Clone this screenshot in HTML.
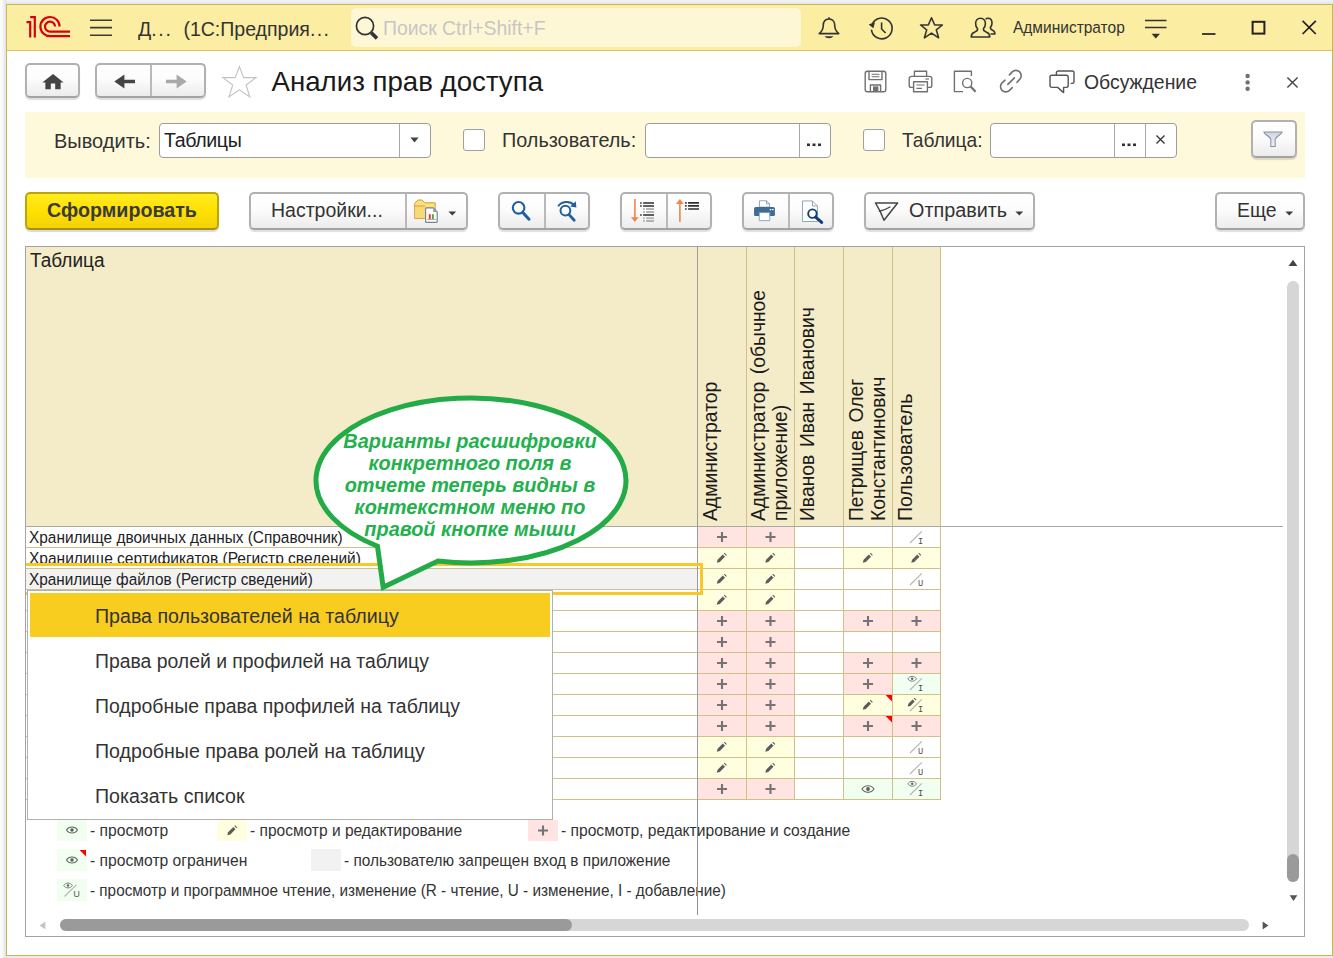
<!DOCTYPE html>
<html lang="ru">
<head>
<meta charset="utf-8">
<title>Анализ прав доступа</title>
<style>
*{box-sizing:border-box;margin:0;padding:0}
html,body{width:1333px;height:958px;overflow:hidden}
body{background:#ececec;font-family:"Liberation Sans",Arial,sans-serif;color:#333;position:relative}
.abs{position:absolute}
#win{position:absolute;left:6px;top:4px;width:1327px;height:952px;background:#fff;border:1px solid #c8b55c;}
#tbar{position:absolute;left:7px;top:5px;width:1325px;height:46px;background:#fbeda1;border-bottom:1px solid #d9c56a}
.t{position:absolute;white-space:nowrap;line-height:1;transform-origin:0 50%;transform:scaleX(var(--k,1))}
.btn{position:absolute;border:2px solid #b1b1b1;border-bottom-color:#a3a3a3;border-radius:5px;background:linear-gradient(#ffffff 0%,#fcfcfc 45%,#ececec 100%);box-shadow:0 2px 1px rgba(0,0,0,.13)}
.div{position:absolute;top:0;bottom:0;width:2px;background:#b9b9b9}
.inp{position:absolute;border:1px solid #9c9c9c;border-radius:4px;background:#fff}
.chk{position:absolute;width:22px;height:22px;border:1px solid #a0a0a0;border-radius:3px;background:#fff}
svg{position:absolute;overflow:visible}
</style>
</head>
<body>
<div class="abs" style="left:0;top:0;width:1333px;height:4px;background:linear-gradient(#f3f3f4,#e6e6e9)"></div>
<div class="abs" style="left:0;top:0;width:6px;height:958px;background:linear-gradient(to right,#fdfdfd 0%,#f6f6f6 45%,#e2e2e2 100%)"></div>
<div id="win"></div>
<div id="tbar"></div>

<!-- TITLE BAR -->
<svg style="left:26px;top:16px" width="45" height="22" viewBox="0 0 45 22">
  <g fill="none" stroke="#d8000f" stroke-width="2.2">
    <path d="M0.5 6.2H4.2V21.5"/>
    <path d="M4.2 1.2H8.8V21.5"/>
    <path d="M44 20.2H24.2A9.6 9.6 0 1 1 33.6 10.6"/>
    <path d="M44 15.6H24.2A5 5 0 1 1 29 10.6"/>
  </g>
</svg>
<svg style="left:90px;top:19px" width="22" height="18" viewBox="0 0 22 18"><g stroke="#3a3a3a" stroke-width="1.6"><path d="M0 1.3H22M0 8.6H22M0 16.3H22"/></g></svg>
<div class="t" style="left:138px;top:17.65px;font-size:21.0px;color:#333;white-space:pre;--k:0.93">Д<span style="letter-spacing:1.8px">...</span>  (1С:Предприя<span style="letter-spacing:1.5px">...</span></div>
<div class="abs" style="left:351px;top:8px;width:450px;height:39px;background:#fef7d6;border-radius:5px"></div>
<svg style="left:355px;top:16px" width="24" height="24" viewBox="0 0 24 24"><circle cx="10" cy="10" r="8.6" fill="none" stroke="#333" stroke-width="1.7"/><path d="M16.2 16.7L22 22.4" stroke="#333" stroke-width="3.6"/></svg>
<div class="t" style="left:383px;top:17.67px;font-size:20.58px;color:#c6c6c6;--k:0.942">Поиск Ctrl+Shift+F</div>

<!-- title bar right icons -->
<svg style="left:817px;top:15px" width="24" height="25" viewBox="0 0 24 25"><g fill="none" stroke="#333" stroke-width="1.6" stroke-linejoin="round"><path d="M12 2.2V4M12 4C7.8 4 6.2 7.4 6.2 11C6.2 15 4.6 16.6 2.2 18.6H21.8C19.4 16.6 17.8 15 17.8 11C17.8 7.4 16.2 4 12 4Z"/></g><path d="M7.6 21.2H16.4C15 23.8 9 23.8 7.6 21.2Z" fill="#333"/></svg>
<svg style="left:867.5px;top:15.7px" width="26" height="25" viewBox="0 0 26 25"><g fill="none" stroke="#333" stroke-width="1.6"><path d="M4.2 8.2A10.4 10.4 0 1 1 3.4 13.6"/><path d="M13.6 6.4V13L17.6 17"/></g><path d="M0.6 8.6L7 6.2L5.4 12.2Z" fill="#333"/></svg>
<svg style="left:918.5px;top:15.7px" width="25" height="24" viewBox="0 0 25 24"><path d="M12.5 1.8L15.7 9H23.4L17.3 13.9L19.6 21.8L12.5 17.1L5.4 21.8L7.7 13.9L1.6 9H9.3Z" fill="none" stroke="#333" stroke-width="1.6" stroke-linejoin="round"/></svg>
<svg style="left:969.5px;top:15.6px" width="26" height="24" viewBox="0 0 26 24"><g fill="none" stroke="#333" stroke-width="1.6" stroke-linejoin="round"><path d="M10.5 2.2C13.6 2.2 15.4 4.6 15.4 7.6C15.4 10 14.4 11.8 13.4 12.8C13.2 14.4 14.6 15.4 16.6 16.2C18.8 17 19.8 18.2 19.8 21H1.2C1.2 18.2 2.2 17 4.4 16.2C6.4 15.4 7.8 14.4 7.6 12.8C6.6 11.8 5.6 10 5.6 7.6C5.6 4.6 7.4 2.2 10.5 2.2Z"/><path d="M15.6 3.2C16.2 2.6 17 2.2 18 2.2C20.6 2.2 22 4.4 22 7C22 9 21.2 10.6 20.4 11.4C20.2 12.8 21.2 13.6 22.6 14.2C24.2 14.8 24.9 16 24.9 18H20.6"/></g></svg>
<div class="t" style="left:1013px;top:19.21px;font-size:16.43px;color:#333;--k:0.9434">Администратор</div>
<svg style="left:1145px;top:19px" width="22" height="20" viewBox="0 0 22 20"><g stroke="#333" stroke-width="1.5"><path d="M0 1.4H21.5M0 8.4H21.5"/></g><path d="M6.6 14.8H15L10.8 19.4Z" fill="#333"/></svg>
<svg style="left:1201.8px;top:20px" width="115" height="16" viewBox="0 0 115 16"><g fill="none" stroke="#222" stroke-width="1.7"><path d="M0 14H13.5"/><rect x="50.6" y="1.8" width="11.8" height="11.8" stroke-width="2"/><path d="M100.6 0.8L113.8 14M113.8 0.8L100.6 14"/></g></svg>

<!-- NAV ROW -->
<div class="btn" style="left:25px;top:63px;width:55px;height:35px"></div>
<svg style="left:41.5px;top:74px" width="22" height="15.7" viewBox="0 0 21 15"><path d="M10.5 0L0.3 8.2H3.2V14.6H8.4V9.2H12.6V14.6H17.8V8.2H20.7Z" fill="#444"/></svg>
<div class="btn" style="left:95px;top:63px;width:111px;height:35px"><div class="div" style="left:53px"></div></div>
<svg style="left:113.5px;top:74px" width="21" height="15" viewBox="0 0 21 15"><path d="M21 5.7H10.4V0.4L0.3 7.5L10.4 14.6V9.3H21Z" fill="#444"/></svg>
<svg style="left:166px;top:74px" width="21" height="15" viewBox="0 0 21 15"><path d="M0 5.7H10.6V0.4L20.7 7.5L10.6 14.6V9.3H0Z" fill="#a9a9a9"/></svg>
<svg style="left:220.6px;top:64.6px" width="36.8" height="34.6" viewBox="0 0 36 34"><path d="M18 1.6L22.2 12.4H34.2L24.6 19.6L28.2 31.4L18 24.4L7.8 31.4L11.4 19.6L1.8 12.4H13.8Z" fill="#fff" stroke="#c2c2c2" stroke-width="1.1" stroke-linejoin="miter"/></svg>
<div class="t" style="left:271.5px;top:68px;font-size:27.65px;color:#1a1a1a">Анализ прав доступа</div>

<!-- nav row right icons -->
<svg style="left:864px;top:70px" width="23" height="23" viewBox="0 0 23 23"><g fill="none" stroke="#707070" stroke-width="1.4" stroke-linejoin="round"><path d="M3.4 1.2H19.6C20.8 1.2 21.8 2.2 21.8 3.4V19.6C21.8 20.8 20.8 21.8 19.6 21.8H3.4C2.2 21.8 1.2 20.8 1.2 19.6V3.4C1.2 2.2 2.2 1.2 3.4 1.2Z"/><path d="M5 1.4V9.6H18V1.4"/><path d="M7.6 4.2H15.4M7.6 6.8H15.4" stroke-width="1.1"/><path d="M6.4 21.6V15H16.6V21.6"/></g><rect x="9" y="16.4" width="5.4" height="5" fill="#707070"/></svg>
<svg style="left:908px;top:70px" width="25" height="23" viewBox="0 0 25 23"><g fill="none" stroke="#707070" stroke-width="1.4" stroke-linejoin="round"><path d="M6.4 6.4V1.2H18.6V6.4"/><path d="M5.6 17.4H3.4C2.2 17.4 1.2 16.4 1.2 15.2V8.6C1.2 7.4 2.2 6.4 3.4 6.4H21.6C22.800000000000001 6.4 23.8 7.4 23.8 8.6V15.2C23.8 16.4 22.8 17.4 21.6 17.4H19.4"/><path d="M5.6 11.8H19.4V21.8H5.6Z"/><path d="M8.4 15H16.6M8.4 18.4H14" stroke-width="1.2"/><path d="M17.4 9H21" stroke-width="1.2"/></g></svg>
<svg style="left:953px;top:70px" width="24" height="23" viewBox="0 0 24 23"><g fill="none" stroke="#707070" stroke-width="1.4"><path d="M18.4 6V1.2H1.4V21.6H10" stroke-linejoin="round"/><circle cx="14.2" cy="13" r="4.6"/><path d="M17.6 16.6L22.6 21.8" stroke-width="2.2"/></g></svg>
<svg style="left:998px;top:68px" width="26" height="26" viewBox="0 0 26 26"><g fill="none" stroke="#707070" stroke-width="1.6" stroke-linecap="round"><path d="M11.4 6.9L14.15 3.9A5.3 5.3 0 0 1 21.65 11.4L19 14.3"/><path d="M7 12.2L4.05 14.85A5.3 5.3 0 0 0 11.55 22.35L14.3 19.6"/><path d="M9.8 16.4L16.4 9.9"/></g></svg>
<svg style="left:1049px;top:70px" width="26" height="24" viewBox="0 0 26 24"><g fill="none" stroke="#555" stroke-width="1.4" stroke-linejoin="round"><path d="M7.4 5V2.8C7.4 1.8 8.2 1 9.2 1H23.2C24.2 1 25 1.8 25 2.8V11.6C25 12.6 24.2 13.4 23.2 13.4H21.6"/><path d="M2.8 5.200000000000001H17.4C18.4 5.2 19.2 6 19.2 7V15.6C19.2 16.6 18.4 17.4 17.4 17.4H14.6V22.6L8.6 17.4H2.8C1.8 17.4 1 16.6 1 15.6V7C1 6 1.8 5.2 2.8 5.2Z"/></g></svg>
<div class="t" style="left:1084px;top:71.8px;font-size:20.37px;color:#333;--k:0.9524">Обсуждение</div>
<svg style="left:1244.4px;top:72.6px" width="8" height="19" viewBox="0 0 8 19"><g fill="#707070"><circle cx="3.6" cy="3" r="2.2"/><circle cx="3.6" cy="9.4" r="2.2"/><circle cx="3.6" cy="15.8" r="2.2"/></g></svg>
<svg style="left:1287px;top:77px" width="11" height="11" viewBox="0 0 11 11"><path d="M0.4 0.4L10.6 10.6M10.6 0.4L0.4 10.6" stroke="#444" stroke-width="1.4"/></svg>

<!-- FILTER PANEL -->
<div class="abs" style="left:25px;top:112px;width:1280px;height:66px;background:#fff9db"></div>
<div class="t" style="left:54px;top:129.65px;font-size:21.0px;color:#333;--k:0.9524">Выводить:</div>
<div class="inp" style="left:159px;top:123px;width:272px;height:35px"><div class="div" style="left:239px;width:1px;background:#a8a8a8"></div></div>
<div class="t" style="left:164px;top:129.67px;font-size:20.58px;letter-spacing:-0.4px;color:#222;--k:0.9524">Таблицы</div>
<svg style="left:410px;top:136.8px" width="9" height="6" viewBox="0 0 9 6"><path d="M0.4 0.6H8.6L4.5 5.4Z" fill="#444"/></svg>
<div class="chk" style="left:463px;top:129px"></div>
<div class="t" style="left:502px;top:130.1px;font-size:20.68px;color:#333;--k:0.959">Пользователь:</div>
<div class="inp" style="left:645px;top:123px;width:186px;height:35px"><div class="div" style="left:153px;width:1px;background:#a8a8a8"></div></div>
<svg style="left:807px;top:143px" width="15" height="4" viewBox="0 0 15 4"><g fill="#333"><rect x="0" y="0.5" width="3" height="2.6"/><rect x="5.5" y="0.5" width="3" height="2.6"/><rect x="11" y="0.5" width="3" height="2.6"/></g></svg>
<div class="chk" style="left:863px;top:129px"></div>
<div class="t" style="left:902px;top:129.69px;font-size:20.16px;color:#333;--k:0.9524">Таблица:</div>
<div class="inp" style="left:990px;top:123px;width:187px;height:35px"><div class="div" style="left:123px;width:1px;background:#a8a8a8"></div><div class="div" style="left:154px;width:1px;background:#a8a8a8"></div></div>
<svg style="left:1122px;top:143px" width="15" height="4" viewBox="0 0 15 4"><g fill="#333"><rect x="0" y="0.5" width="3" height="2.6"/><rect x="5.5" y="0.5" width="3" height="2.6"/><rect x="11" y="0.5" width="3" height="2.6"/></g></svg>
<svg style="left:1156px;top:135px" width="9" height="9" viewBox="0 0 9 9"><path d="M0.5 0.5L8.5 8.5M8.5 0.5L0.5 8.5" stroke="#333" stroke-width="1.3"/></svg>
<div class="btn" style="left:1251px;top:120px;width:46px;height:38px;"></div>
<svg style="left:1262.5px;top:130.6px" width="20" height="16.8" viewBox="0 0 22 18" preserveAspectRatio="none"><defs><linearGradient id="fg" x1="0" y1="0" x2="0" y2="1"><stop offset="0" stop-color="#cfd6de"/><stop offset="1" stop-color="#eef1f4"/></linearGradient></defs><path d="M1 1H21C21 3.2 13.4 6.6 13.4 9V16.6H8.6V9C8.6 6.6 1 3.2 1 1Z" fill="url(#fg)" stroke="#85919e" stroke-width="1.1"/></svg>

<!-- COMMAND BAR -->
<div class="btn" style="left:25px;top:192px;width:194px;height:38px;border-color:#bba60a;border-bottom-color:#a89200;background:linear-gradient(#ffeb22 0%,#ffe100 50%,#f3d10a 100%);box-shadow:0 2px 1px rgba(0,0,0,.15)"></div>
<div class="t" style="left:47px;top:201px;font-size:19.7px;font-weight:bold;color:#3a3a3a">Сформировать</div>
<div class="btn" style="left:249px;top:192px;width:219px;height:38px"><div class="div" style="left:154px"></div></div>
<div class="t" style="left:270.5px;top:200.17px;font-size:20.48px;color:#333;--k:0.9524">Настройки...</div>
<div class="btn" style="left:498px;top:192px;width:92px;height:38px"><div class="div" style="left:44px"></div></div>
<div class="btn" style="left:620px;top:192px;width:92px;height:38px"><div class="div" style="left:44px"></div></div>
<div class="btn" style="left:742px;top:192px;width:92px;height:38px"><div class="div" style="left:44px"></div></div>
<div class="btn" style="left:864px;top:192px;width:171px;height:38px"></div>
<div class="t" style="left:909px;top:199.66px;font-size:20.79px;color:#333;--k:0.9524">Отправить</div>
<svg style="left:1015.2px;top:210.6px" width="9" height="6" viewBox="0 0 9 6"><path d="M0.4 0.4H8.2L4.3 4.4Z" fill="#3c3c3c"/></svg>
<div class="btn" style="left:1215px;top:192px;width:90px;height:38px"></div>
<div class="t" style="left:1237px;top:199.68px;font-size:20.37px;color:#333;--k:0.9524">Еще</div>
<svg style="left:1285.2px;top:210.6px" width="9" height="6" viewBox="0 0 9 6"><path d="M0.4 0.4H8.2L4.3 4.4Z" fill="#3c3c3c"/></svg>
<svg style="left:448.2px;top:210.6px" width="9" height="6" viewBox="0 0 9 6"><path d="M0.4 0.4H8.2L4.3 4.4Z" fill="#3c3c3c"/></svg>

<!-- command bar icons -->
<svg style="left:413px;top:198px" width="26" height="26" viewBox="0 0 26 26">
  <path d="M1.7 20.4V5.2L5.1 2H9L11.600000000000001 4.8H22.2V20.4Z" fill="#fde27c" stroke="#d9983c" stroke-width="1" stroke-linejoin="round"/>
  <path d="M2.2 8.5H21.700000000000003V19.9H2.2Z" fill="#f8d878"/>
  <path d="M1.7 8H12" stroke="#d9983c" stroke-width="1"/>
  <path d="M13.4 9.9H20.2L24.2 13.9V23.4C24.2 24 23.8 24.3 23.3 24.3H13.4C12.9 24.3 12.6 24 12.6 23.4V10.8C12.6 10.2 12.9 9.9 13.4 9.9Z" fill="#fff" stroke="#6f879b" stroke-width="1.2"/>
  <path d="M20.2 9.9V13.9H24.2Z" fill="#8da0b2"/>
  <rect x="15.8" y="16.200000000000003" width="1.9" height="4.8" fill="#e8331c"/><rect x="18.9" y="16.2" width="1.9" height="4.8" fill="#4aa83a"/>
  <path d="M14.2 21.4H23" stroke="#9a7a7a" stroke-width="0.7"/>
</svg>
<svg style="left:511px;top:200px" width="20" height="21" viewBox="0 0 20 21"><circle cx="7.6" cy="7.8" r="5.8" fill="none" stroke="#1f5f9f" stroke-width="2.1"/><path d="M11.8 12.4L18 19.2" stroke="#1f5f9f" stroke-width="3" stroke-linecap="round"/></svg>
<svg style="left:556px;top:199px" width="23" height="23" viewBox="0 0 23 23"><circle cx="9.4" cy="11.6" r="4.9" fill="none" stroke="#1f5f9f" stroke-width="2"/><path d="M13 15.6L18.2 21.2" stroke="#1f5f9f" stroke-width="2.8" stroke-linecap="round"/><path d="M2.2 7.4C5.2 2.2 13.6 1.4 18 6" fill="none" stroke="#1f5f9f" stroke-width="1.9"/><path d="M14.2 7.6L20.4 8.4L19.8 2.2Z" fill="#1f5f9f"/></svg>
<svg style="left:620px;top:192px" width="92" height="38" viewBox="0 0 92 38"><path d="M14.9 7V26" stroke="#f08447" stroke-width="1.6"/><path d="M11 25.2H18.6L14.8 30Z" fill="#f08447"/><path d="M20.1 10.9H21.7M23.1 10.9H34M20.1 13.9H21.7M23.1 13.9H34M20.1 23H21.7M23.1 23H34" stroke="#2e2e2e" stroke-width="1.5"/><path d="M23.1 17H24.7M26.1 17H34M23.1 20H24.7M26.1 20H34M23.1 26.1H24.7M26.1 26.1H34M23.1 29H24.7M26.1 29H34" stroke="#9c9c9c" stroke-width="1.4"/><path d="M59.9 11V30" stroke="#f08447" stroke-width="1.6"/><path d="M56 12H63.8L59.9 7Z" fill="#f08447"/><path d="M65.1 10.9H66.7M68.1 10.9H79M65.1 13.9H66.7M68.1 13.9H79M65.1 17H66.7M68.1 17H79" stroke="#2e2e2e" stroke-width="1.6"/></svg>

<svg style="left:753px;top:200px" width="23" height="22" viewBox="0 0 23 23"><path d="M6.2 7.4V0.8H13.6L16.8 4V7.4Z" fill="#fff" stroke="#7f98b2" stroke-width="0.9"/><path d="M13.6 0.8V4H16.8" fill="none" stroke="#7f98b2" stroke-width="0.9"/><path d="M2.4 7.4H20.6C21.8 7.4 22.4 8.2 22.4 9.2V15.4C22.4 16.2 21.8 16.8 21 16.8H2C1.2 16.8 0.6 16.2 0.6 15.4V9.2C0.6 8.2 1.2 7.4 2.4 7.4Z" fill="#3f6b97"/><path d="M6 13.2H17V21.6H6Z" fill="#fff" stroke="#7f98b2" stroke-width="0.9"/><rect x="17" y="9.4" width="1.6" height="1.3" fill="#fff"/><rect x="19.4" y="9.4" width="1.6" height="1.3" fill="#fff"/></svg>
<svg style="left:801px;top:199.5px" width="24" height="24" viewBox="0 0 24 25"><path d="M1 1H11.4L16.6 6.2V22.4H1Z" fill="#fff" stroke="#7f98b2" stroke-width="0.9"/><path d="M11.4 1V6.2H16.6" fill="none" stroke="#7f98b2" stroke-width="0.9"/><circle cx="11.4" cy="14.2" r="4.4" fill="#fff" stroke="#0f3f7a" stroke-width="2"/><path d="M14.8 17.8L21 23.4" stroke="#0f3f7a" stroke-width="3.2" stroke-linecap="round"/></svg>
<svg style="left:874px;top:201px" width="25" height="21" viewBox="0 0 25 21"><path d="M1.5 2H23.6L10 19.2L6 10Z" fill="none" stroke="#444" stroke-width="1.5" stroke-linejoin="round"/><path d="M5.4 10.2C9 9.6 12.6 8 16 6" fill="none" stroke="#444" stroke-width="1.4" stroke-linecap="round"/></svg>

<!-- SPREADSHEET -->
<div class="abs" style="left:25px;top:246px;width:1280px;height:691px;border:1px solid #a3a3a3;background:#fff"></div>
<div class="abs" style="left:26px;top:247px;width:914px;height:279px;background:#f4ecc8"></div>
<div class="abs" style="left:698px;top:527px;width:48px;height:20px;background:#ffe4e1"></div>
<div class="abs" style="left:747px;top:527px;width:47px;height:20px;background:#ffe4e1"></div>
<div class="abs" style="left:698px;top:548px;width:48px;height:20px;background:#ffffe0"></div>
<div class="abs" style="left:747px;top:548px;width:47px;height:20px;background:#ffffe0"></div>
<div class="abs" style="left:844px;top:548px;width:48px;height:20px;background:#ffffe0"></div>
<div class="abs" style="left:893px;top:548px;width:47px;height:20px;background:#ffffe0"></div>
<div class="abs" style="left:698px;top:569px;width:48px;height:20px;background:#ffffe0"></div>
<div class="abs" style="left:747px;top:569px;width:47px;height:20px;background:#ffffe0"></div>
<div class="abs" style="left:698px;top:590px;width:48px;height:20px;background:#ffffe0"></div>
<div class="abs" style="left:747px;top:590px;width:47px;height:20px;background:#ffffe0"></div>
<div class="abs" style="left:698px;top:611px;width:48px;height:20px;background:#ffe4e1"></div>
<div class="abs" style="left:747px;top:611px;width:47px;height:20px;background:#ffe4e1"></div>
<div class="abs" style="left:844px;top:611px;width:48px;height:20px;background:#ffe4e1"></div>
<div class="abs" style="left:893px;top:611px;width:47px;height:20px;background:#ffe4e1"></div>
<div class="abs" style="left:698px;top:632px;width:48px;height:20px;background:#ffe4e1"></div>
<div class="abs" style="left:747px;top:632px;width:47px;height:20px;background:#ffe4e1"></div>
<div class="abs" style="left:698px;top:653px;width:48px;height:20px;background:#ffe4e1"></div>
<div class="abs" style="left:747px;top:653px;width:47px;height:20px;background:#ffe4e1"></div>
<div class="abs" style="left:844px;top:653px;width:48px;height:20px;background:#ffe4e1"></div>
<div class="abs" style="left:893px;top:653px;width:47px;height:20px;background:#ffe4e1"></div>
<div class="abs" style="left:698px;top:674px;width:48px;height:20px;background:#ffe4e1"></div>
<div class="abs" style="left:747px;top:674px;width:47px;height:20px;background:#ffe4e1"></div>
<div class="abs" style="left:844px;top:674px;width:48px;height:20px;background:#ffe4e1"></div>
<div class="abs" style="left:893px;top:674px;width:47px;height:20px;background:#f0fff0"></div>
<div class="abs" style="left:698px;top:695px;width:48px;height:20px;background:#ffe4e1"></div>
<div class="abs" style="left:747px;top:695px;width:47px;height:20px;background:#ffe4e1"></div>
<div class="abs" style="left:844px;top:695px;width:48px;height:20px;background:#ffffe0"></div>
<div class="abs" style="left:893px;top:695px;width:47px;height:20px;background:#ffffe0"></div>
<div class="abs" style="left:698px;top:716px;width:48px;height:20px;background:#ffe4e1"></div>
<div class="abs" style="left:747px;top:716px;width:47px;height:20px;background:#ffe4e1"></div>
<div class="abs" style="left:844px;top:716px;width:48px;height:20px;background:#ffe4e1"></div>
<div class="abs" style="left:893px;top:716px;width:47px;height:20px;background:#ffe4e1"></div>
<div class="abs" style="left:698px;top:737px;width:48px;height:20px;background:#ffffe0"></div>
<div class="abs" style="left:747px;top:737px;width:47px;height:20px;background:#ffffe0"></div>
<div class="abs" style="left:698px;top:758px;width:48px;height:20px;background:#ffffe0"></div>
<div class="abs" style="left:747px;top:758px;width:47px;height:20px;background:#ffffe0"></div>
<div class="abs" style="left:698px;top:779px;width:48px;height:20px;background:#ffe4e1"></div>
<div class="abs" style="left:747px;top:779px;width:47px;height:20px;background:#ffe4e1"></div>
<div class="abs" style="left:844px;top:779px;width:48px;height:20px;background:#f0fff0"></div>
<div class="abs" style="left:893px;top:779px;width:47px;height:20px;background:#f0fff0"></div>
<div class="t" style="left:29px;top:530.13px;font-size:16.73px;color:#222;--k:0.9174;--k:0.9207">Хранилище двоичных данных (Справочник)</div>
<div class="t" style="left:29px;top:551.13px;font-size:16.73px;color:#222;--k:0.9174;--k:0.928">Хранилище сертификатов (Регистр сведений)</div>
<div class="abs" style="left:26px;top:563px;width:674px;height:31px;background:#fff"></div>
<div class="abs" style="left:26px;top:569px;width:671px;height:20px;background:#f2f2f2"></div>
<svg style="left:0;top:0" width="1333" height="958" viewBox="0 0 1333 958">
<defs>
<g id="plus"><path d="M-5 0H5M0 -5V5" stroke="#747474" stroke-width="2.1" fill="none"/></g>
<g id="pen"><path d="M-4.7 4.7L-3.9 1.7L1.3 -3.5L3.5 -1.3L-1.7 3.9Z" fill="#5c5c5c"/><path d="M2.3 -4.5L3.1 -5.3L5.3 -3.1L4.5 -2.3Z" fill="#5c5c5c"/></g>
<g id="eye"><path d="M-6 0C-3.4 -4.4 3.4 -4.4 6 0C3.4 4.4 -3.4 4.4 -6 0Z" fill="none" stroke="#6a6a6a" stroke-width="1.15"/><circle cx="0" cy="0" r="1.9" fill="#5c5c5c"/></g>
<g id="slash"><path d="M-6.5 6L5.3 -5.6" stroke="#b4b4b4" stroke-width="1.1" fill="none"/></g>
<g id="eyes"><path d="M-4.3 0C-2.5 -3.2 2.5 -3.2 4.3 0C2.5 3.2 -2.5 3.2 -4.3 0Z" fill="none" stroke="#777" stroke-width="0.95"/><circle cx="0" cy="0" r="1.25" fill="#666"/></g>
<g id="pens"><path d="M-4.1 4.1L-3.4 1.4L0.9 -2.900000000000000L3 -0.8L-1.3 3.5Z" fill="#5c5c5c"/><path d="M1.9 -3.9L2.7 -4.7L4.8 -2.6L4 -1.8Z" fill="#5c5c5c"/></g>
<g id="red"><path d="M-6.4 0H0V6.4Z" fill="#ff0000"/></g>
</defs>
<path d="M26 547.5H941" stroke="#cfc188" stroke-width="1"/>
<path d="M26 568.5H941" stroke="#cfc188" stroke-width="1"/>
<path d="M26 589.5H941" stroke="#cfc188" stroke-width="1"/>
<path d="M26 610.5H941" stroke="#cfc188" stroke-width="1"/>
<path d="M26 631.5H941" stroke="#cfc188" stroke-width="1"/>
<path d="M26 652.5H941" stroke="#cfc188" stroke-width="1"/>
<path d="M26 673.5H941" stroke="#cfc188" stroke-width="1"/>
<path d="M26 694.5H941" stroke="#cfc188" stroke-width="1"/>
<path d="M26 715.5H941" stroke="#cfc188" stroke-width="1"/>
<path d="M26 736.5H941" stroke="#cfc188" stroke-width="1"/>
<path d="M26 757.5H941" stroke="#cfc188" stroke-width="1"/>
<path d="M26 778.5H941" stroke="#cfc188" stroke-width="1"/>
<path d="M26 799.5H941" stroke="#cfc188" stroke-width="1"/>
<path d="M746.5 247V799" stroke="#cfc188" stroke-width="1"/>
<path d="M794.5 247V799" stroke="#cfc188" stroke-width="1"/>
<path d="M843.5 247V799" stroke="#cfc188" stroke-width="1"/>
<path d="M892.5 247V799" stroke="#cfc188" stroke-width="1"/>
<path d="M940.5 247V799" stroke="#cfc188" stroke-width="1"/>
<path d="M26 526.5H1283" stroke="#a8a8a8" stroke-width="1"/>
<path d="M697.5 247V915" stroke="#9c9c9c" stroke-width="1"/>
<use href="#plus" x="722.0" y="537"/>
<use href="#plus" x="770.5" y="537"/>
<use href="#slash" x="916.5" y="537"/>
<text x="918.1" y="544.2" font-family="Liberation Mono, monospace" font-size="8.6" fill="#4a4a4a">I</text>
<use href="#pen" x="721.5" y="558"/>
<use href="#pen" x="770.0" y="558"/>
<use href="#pen" x="867.5" y="558"/>
<use href="#pen" x="916.0" y="558"/>
<use href="#pen" x="721.5" y="579"/>
<use href="#pen" x="770.0" y="579"/>
<use href="#slash" x="916.5" y="579"/>
<text x="918.1" y="586.2" font-family="Liberation Mono, monospace" font-size="8.6" fill="#4a4a4a">U</text>
<use href="#pen" x="721.5" y="600"/>
<use href="#pen" x="770.0" y="600"/>
<use href="#plus" x="722.0" y="621"/>
<use href="#plus" x="770.5" y="621"/>
<use href="#plus" x="868.0" y="621"/>
<use href="#plus" x="916.5" y="621"/>
<use href="#plus" x="722.0" y="642"/>
<use href="#plus" x="770.5" y="642"/>
<use href="#plus" x="722.0" y="663"/>
<use href="#plus" x="770.5" y="663"/>
<use href="#plus" x="868.0" y="663"/>
<use href="#plus" x="916.5" y="663"/>
<use href="#plus" x="722.0" y="684"/>
<use href="#plus" x="770.5" y="684"/>
<use href="#plus" x="868.0" y="684"/>
<use href="#slash" x="916.5" y="684"/>
<text x="918.1" y="691.2" font-family="Liberation Mono, monospace" font-size="8.6" fill="#4a4a4a">I</text>
<use href="#eyes" x="912.2" y="678.8"/>
<use href="#plus" x="722.0" y="705"/>
<use href="#plus" x="770.5" y="705"/>
<use href="#pen" x="867.5" y="705"/>
<use href="#red" x="892" y="695"/>
<use href="#slash" x="916.5" y="705"/>
<text x="918.1" y="712.2" font-family="Liberation Mono, monospace" font-size="8.6" fill="#4a4a4a">I</text>
<use href="#pens" x="911.7" y="702.4"/>
<use href="#plus" x="722.0" y="726"/>
<use href="#plus" x="770.5" y="726"/>
<use href="#plus" x="868.0" y="726"/>
<use href="#red" x="892" y="716"/>
<use href="#plus" x="916.5" y="726"/>
<use href="#pen" x="721.5" y="747"/>
<use href="#pen" x="770.0" y="747"/>
<use href="#slash" x="916.5" y="747"/>
<text x="918.1" y="754.2" font-family="Liberation Mono, monospace" font-size="8.6" fill="#4a4a4a">U</text>
<use href="#pen" x="721.5" y="768"/>
<use href="#pen" x="770.0" y="768"/>
<use href="#slash" x="916.5" y="768"/>
<text x="918.1" y="775.2" font-family="Liberation Mono, monospace" font-size="8.6" fill="#4a4a4a">U</text>
<use href="#plus" x="722.0" y="789"/>
<use href="#plus" x="770.5" y="789"/>
<use href="#eye" x="868.0" y="789"/>
<use href="#slash" x="916.5" y="789"/>
<text x="918.1" y="796.2" font-family="Liberation Mono, monospace" font-size="8.6" fill="#4a4a4a">I</text>
<use href="#eyes" x="912.2" y="783.8"/>
</svg>
<div class="t" style="left:29.8px;top:250.23px;font-size:20.52px;color:#222;--k:0.9259">Таблица</div>
<div class="t" style="left:699px;top:521px;font-size:20.6px;color:#1a1a1a;transform-origin:0 0;transform:rotate(-90deg) scaleX(0.937);word-spacing:2.4px;line-height:22px;height:22px">Администратор</div>
<div class="t" style="left:747px;top:521px;font-size:20.6px;color:#1a1a1a;transform-origin:0 0;transform:rotate(-90deg) scaleX(0.937);word-spacing:2.4px;line-height:22px;height:22px">Администратор (обычное</div><div class="t" style="left:769px;top:521px;font-size:20.6px;color:#1a1a1a;transform-origin:0 0;transform:rotate(-90deg) scaleX(0.937);word-spacing:2.4px;line-height:22px;height:22px">приложение)</div>
<div class="t" style="left:796px;top:521px;font-size:20.6px;color:#1a1a1a;transform-origin:0 0;transform:rotate(-90deg) scaleX(0.937);word-spacing:2.4px;line-height:22px;height:22px">Иванов Иван Иванович</div>
<div class="t" style="left:845px;top:521px;font-size:20.6px;color:#1a1a1a;transform-origin:0 0;transform:rotate(-90deg) scaleX(0.937);word-spacing:2.4px;line-height:22px;height:22px">Петрищев Олег</div><div class="t" style="left:867px;top:521px;font-size:20.6px;color:#1a1a1a;transform-origin:0 0;transform:rotate(-90deg) scaleX(0.937);word-spacing:2.4px;line-height:22px;height:22px">Константинович</div>
<div class="t" style="left:894px;top:521px;font-size:20.6px;color:#1a1a1a;transform-origin:0 0;transform:rotate(-90deg) scaleX(0.953);word-spacing:2.4px;line-height:22px;height:22px">Пользователь</div>
<div class="abs" style="left:26px;top:563px;width:677px;height:32px;border:3px solid #f8c828;border-left:none"></div>
<div class="t" style="left:29px;top:572.13px;font-size:16.73px;color:#222;--k:0.9174">Хранилище файлов (Регистр сведений)</div>
<!-- LEGEND -->
<div class="abs" style="left:57px;top:820px;width:30px;height:21px;background:#f0fff0"></div>
<div class="abs" style="left:217px;top:820px;width:30px;height:21px;background:#ffffe0"></div>
<div class="abs" style="left:528px;top:820px;width:30px;height:21px;background:#ffe4e1"></div>
<div class="abs" style="left:57px;top:849.4px;width:30px;height:21.6px;background:#f0fff0"></div>
<div class="abs" style="left:311px;top:849.4px;width:30px;height:21.6px;background:#f2f2f2"></div>
<div class="abs" style="left:57px;top:879.2px;width:30px;height:21.6px;background:#f0fff0"></div>
<svg style="left:0;top:0" width="1333" height="958" viewBox="0 0 1333 958">
<use href="#eye" x="72" y="830" transform="translate(72 830) scale(0.92) translate(-72 -830)"/><use href="#pen" x="232" y="830.5"/><use href="#plus" x="543" y="830.5"/>
<use href="#eye" x="72" y="860" transform="translate(72 860) scale(0.92) translate(-72 -860)"/><use href="#red" x="86" y="850"/>
<use href="#slash" x="71" y="890.5"/><use href="#eyes" x="68" y="885.5"/><text x="73.6" y="897" font-family="Liberation Sans, sans-serif" font-size="8.8" fill="#555">U</text>
</svg>
<div class="t" style="left:89.5px;top:823.0px;font-size:16.7px;color:#333;--k:0.937">- просмотр</div>
<div class="t" style="left:249.5px;top:823.0px;font-size:16.7px;color:#333;--k:0.93">- просмотр и редактирование</div>
<div class="t" style="left:560.5px;top:823.0px;font-size:16.7px;color:#333;--k:0.936">- просмотр, редактирование и создание</div>
<div class="t" style="left:89.5px;top:853.0px;font-size:16.7px;color:#333;--k:0.938">- просмотр ограничен</div>
<div class="t" style="left:343.5px;top:853.0px;font-size:16.7px;color:#333;--k:0.922">- пользователю запрещен вход в приложение</div>
<div class="t" style="left:89.5px;top:883.0px;font-size:16.7px;color:#333;--k:0.9165">- просмотр и программное чтение, изменение (R - чтение, U - изменение, I - добавление)</div>
<!-- frozen line over legend text -->
<div class="abs" style="left:697px;top:800px;width:1px;height:115px;background:#8f8f8f"></div>

<!-- SCROLLBARS -->
<div class="abs" style="left:1287px;top:281px;width:12px;height:601px;border-radius:6px;background:#d6d6d6"></div>
<div class="abs" style="left:1287px;top:854px;width:12px;height:27.5px;border-radius:6px;background:#9a9a9a"></div>
<svg style="left:1288px;top:259px" width="10" height="8" viewBox="0 0 10 8"><path d="M5 0.8L9.4 7H0.6Z" fill="#444"/></svg>
<svg style="left:1288.5px;top:894px" width="9" height="8" viewBox="0 0 9 8"><path d="M4.5 7L8.4 1.2H0.6Z" fill="#555"/></svg>
<div class="abs" style="left:60px;top:919px;width:1189px;height:12px;border-radius:6px;background:#d6d6d6"></div>
<div class="abs" style="left:60px;top:919px;width:512px;height:12px;border-radius:6px;background:#9a9a9a"></div>
<svg style="left:39px;top:921px" width="7" height="9" viewBox="0 0 7 9"><path d="M0.6 4.5L6.4 0.6V8.4Z" fill="#c4c4c4"/></svg>
<svg style="left:1262px;top:921px" width="7" height="9" viewBox="0 0 7 9"><path d="M6.4 4.5L0.6 0.6V8.4Z" fill="#555"/></svg>

<!-- CONTEXT MENU -->
<div class="abs" style="left:27px;top:590px;width:526px;height:230px;background:#fff;border:1px solid #b0b0b0"></div>
<div class="abs" style="left:30px;top:593px;width:520px;height:44px;background:#f9cc20"></div>
<div class="t" style="left:95.0px;top:606.8px;font-size:19.6px;color:#333">Права пользователей на таблицу</div>
<div class="t" style="left:95.0px;top:651.8px;font-size:19.6px;color:#333;--k:0.989">Права ролей и профилей на таблицу</div>
<div class="t" style="left:95.0px;top:696.8px;font-size:19.6px;color:#333;--k:0.992">Подробные права профилей на таблицу</div>
<div class="t" style="left:95.0px;top:741.8px;font-size:19.6px;color:#333">Подробные права ролей на таблицу</div>
<div class="t" style="left:95.0px;top:786.8px;font-size:19.6px;color:#333">Показать список</div>

<!-- SPEECH BUBBLE -->
<svg style="left:0;top:0" width="1333" height="958" viewBox="0 0 1333 958">
<path d="M438 561.1A155 82.5 0 1 0 377.5 546.3L383.2 587.3Z" fill="#fff" stroke="#22ab47" stroke-width="5" stroke-linejoin="miter"/>
<g font-family="Liberation Sans, Arial, sans-serif" font-weight="bold" font-style="italic" font-size="19.9" fill="#22b14c" text-anchor="middle">
<text x="470" y="448.1">Варианты расшифровки</text>
<text x="470" y="470.3">конкретного поля в</text>
<text x="470" y="492.1">отчете теперь видны в</text>
<text x="470" y="514.2">контекстном меню по</text>
<text x="470" y="536.3">правой кнопке мыши</text>
</g>
</svg>

</body>
</html>
